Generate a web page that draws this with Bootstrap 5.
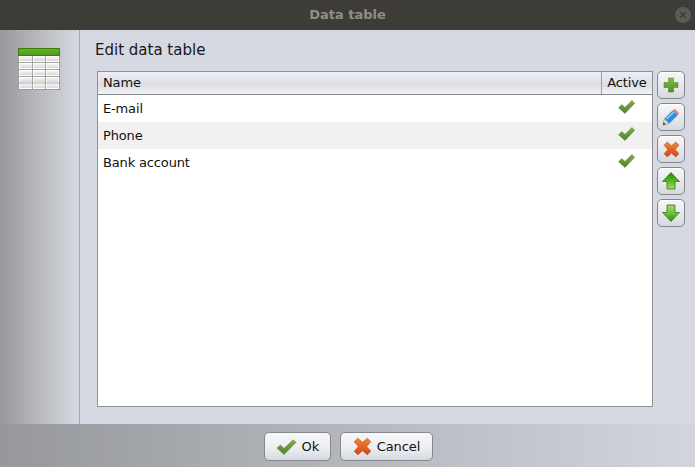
<!DOCTYPE html>
<html lang="en">
<head>
  <meta charset="UTF-8">
  <title>Data table</title>
  <link href="https://cdn.jsdelivr.net/npm/bootstrap@5.3.3/dist/css/bootstrap.min.css" rel="stylesheet">
  <style>
    html, body { height: 467px; overflow: hidden; }
    body {
      font-family: "DejaVu Sans", sans-serif;
      font-size: 13px;
      color: #111;
      background: #d6d9e1;
    }
    .win { width: 695px; height: 467px; }
    .titlebar {
      height: 30px;
      background: linear-gradient(#3e3d39, #3c3b37);
      color: #8f8d88;
      font-weight: 700;
      font-size: 13px;
    }
    .close-dot {
      right: 4px;
      top: 7px;
      width: 16px;
      height: 16px;
      border-radius: 50%;
      background: #5c5b57;
    }
    .mid { height: 394px; }
    .side {
      width: 80px;
      border-right: 1px solid #a4a7ae;
      background: linear-gradient(90deg, #96989c, #b9babf 50%, #d6d9e1);
      padding: 18px 0 0 18px;
    }
    .main { padding: 10px 10px 17px 15px; }
    .heading { font-size: 15px; line-height: 21px; margin: 0 0 10px 0; color: #1c1620; }
    .tbl-wrap { margin-left: 2px; }
    .tbl-box {
      width: 556px;
      height: 336px;
      border: 1px solid #8f9197;
      background: #fff;
      letter-spacing: -.15px;
    }
    .tbl-head {
      height: 23px;
      line-height: 21px;
      border-bottom: 1px solid #83858b;
      background: linear-gradient(#eceef2, #dcdee4 60%, #f3f4f6);
    }
    .col-name { flex: 1; padding-left: 5px; }
    .col-act { width: 51px; text-align: center; }
    .tbl-head .col-act { border-left: 1px solid #a0a2a8; }
    .tbl-row { height: 27px; line-height: 27px; }
    .tbl-row.alt { background: #f1f1f1; }
    .tick-cell { display: flex; justify-content: center; padding: 5px 1px 0 0; }
    .tool-col { width: 28px; margin-left: 4px; }
    .tool-btn {
      width: 28px;
      height: 28px;
      border: 1px solid #85878d;
      border-radius: 5px;
      background: linear-gradient(#f7f7f9, #e6e8ec 55%, #d4d7de);
      box-shadow: 0 1px 0 #fff inset;
      padding: 0;
    }
    .foot {
      height: 43px;
      background: linear-gradient(90deg, #96989c, #d2d5dc);
      padding: 8px 0 0 2px;
    }
    .foot-btn {
      height: 29px;
      border: 1px solid #85878d;
      border-radius: 5px;
      background: linear-gradient(#f7f7f9, #eceef1 55%, #d6d9e0);
      font-size: 13px;
      color: #111;
      padding: 0;
    }
    .foot-btn span { margin-left: 1px; }
    .ok-btn { width: 67px; margin-right: 9px; }
    .cancel-btn { width: 93px; letter-spacing: -.1px; }
  </style>
</head>
<body>

<!-- shared gradients and shapes for the icons -->
<svg width="0" height="0" class="position-absolute">
  <defs>
    <linearGradient id="gGreen" x1="0" y1="0" x2="0" y2="1"><stop offset="0" stop-color="#8bbf3f"/><stop offset="1" stop-color="#4f8a2a"/></linearGradient>
    <linearGradient id="gTick" x1="0" y1="0" x2="0" y2="1"><stop offset="0" stop-color="#86ad4c"/><stop offset="1" stop-color="#527f2a"/></linearGradient>
    <linearGradient id="gUp" x1="0" y1="0" x2="0" y2="1"><stop offset="0" stop-color="#1f8a0c"/><stop offset=".6" stop-color="#5cc02a"/><stop offset="1" stop-color="#a4dc6a"/></linearGradient>
    <linearGradient id="gDown" x1="0" y1="0" x2="0" y2="1"><stop offset="0" stop-color="#a4dc6a"/><stop offset=".5" stop-color="#6cc43a"/><stop offset="1" stop-color="#2a8f10"/></linearGradient>
    <linearGradient id="gRed" x1="0" y1="0" x2="0" y2="1"><stop offset="0" stop-color="#f08a32"/><stop offset="1" stop-color="#d3421a"/></linearGradient>
    <linearGradient id="gHead" x1="0" y1="0" x2="0" y2="1"><stop offset="0" stop-color="#69b324"/><stop offset="1" stop-color="#4f9a18"/></linearGradient>
    <linearGradient id="gCell" x1="0" y1="0" x2="0" y2="1"><stop offset="0" stop-color="#f4f4f4"/><stop offset="1" stop-color="#d8d8d8"/></linearGradient>
    <symbol id="tick" viewBox="0 0 17 14"><path d="M.5 7.800L3.800 4.600 7 7.400 13.800.5l2.900 2.700L7 13.500z" fill="url(#gTick)" stroke="#5a8430" stroke-width=".5"/></symbol>
    <symbol id="cross" viewBox="0 0 16 16"><path d="M1 4L4 1 8 4.500 12 1l3 3-3.500 4 3.500 4-3 3-4-3.500L4 15l-3-3 3.500-4z" fill="url(#gRed)" stroke="#c8441a" stroke-width=".5"/></symbol>
  </defs>
</svg>

<div class="win d-flex flex-column">
  <!-- Title bar -->
  <div class="titlebar position-relative d-flex align-items-center justify-content-center">
    <span>Data table</span>
    <div class="close-dot position-absolute d-flex align-items-center justify-content-center">
      <svg width="8" height="8" viewBox="0 0 8 8"><path d="M1 1l6 6M7 1L1 7" stroke="#3c3b37" stroke-width="1.400"/></svg>
    </div>
  </div>

  <div class="mid d-flex">
    <!-- Left strip with table icon -->
    <div class="side">
      <svg width="42" height="42" viewBox="0 0 42 42" class="d-block">
        <rect x="0.500" y="0.500" width="41" height="41" fill="#fff" stroke="#9a9a9a"/>
        <rect x="0.500" y="0.500" width="41" height="7" fill="url(#gHead)" stroke="#3d7d12"/>
        <g fill="url(#gCell)">
          <rect x="2" y="9" width="12" height="4"/><rect x="16" y="9" width="11" height="4"/><rect x="29" y="9" width="11" height="4"/>
          <rect x="2" y="16" width="12" height="4"/><rect x="16" y="16" width="11" height="4"/><rect x="29" y="16" width="11" height="4"/>
          <rect x="2" y="23" width="12" height="4"/><rect x="16" y="23" width="11" height="4"/><rect x="29" y="23" width="11" height="4"/>
          <rect x="2" y="30" width="12" height="4"/><rect x="16" y="30" width="11" height="4"/><rect x="29" y="30" width="11" height="4"/>
          <rect x="2" y="36" width="12" height="4"/><rect x="16" y="36" width="11" height="4"/><rect x="29" y="36" width="11" height="4"/>
        </g>
        <path d="M1 14.500h40M1 21.500h40M1 28.500h40M1 35h40M14.500 8v33M27.500 8v33" stroke="#a5a5a5"/>
      </svg>
    </div>

    <div class="main flex-grow-1">
      <p class="heading">Edit data table</p>
      <div class="tbl-wrap d-flex">
        <div class="tbl-box">
          <div class="tbl-head d-flex">
            <div class="col-name">Name</div>
            <div class="col-act">Active</div>
          </div>
          <div class="tbl-row d-flex">
            <div class="col-name">E-mail</div>
            <div class="col-act tick-cell"><svg width="17" height="14"><use href="#tick"/></svg></div>
          </div>
          <div class="tbl-row alt d-flex">
            <div class="col-name">Phone</div>
            <div class="col-act tick-cell"><svg width="17" height="14"><use href="#tick"/></svg></div>
          </div>
          <div class="tbl-row d-flex">
            <div class="col-name">Bank account</div>
            <div class="col-act tick-cell"><svg width="17" height="14"><use href="#tick"/></svg></div>
          </div>
        </div>

        <!-- Side tool buttons -->
        <div class="tool-col d-flex flex-column gap-1">
          <button class="tool-btn d-flex align-items-center justify-content-center">
            <svg width="16" height="16" viewBox="0 0 16 16"><path d="M5.500 1h5v4.500H15v5h-4.500V15h-5v-4.500H1v-5h4.500z" fill="url(#gGreen)" stroke="#4c7a26" stroke-width=".5"/></svg>
          </button>
          <button class="tool-btn d-flex align-items-center justify-content-center">
            <svg width="18" height="18" viewBox="0 0 18 18">
              <path d="M1 17l1.500-6L11 2.500 15.500 7 7 15.500z" fill="#2f8fd8" stroke="#1f6aa8" stroke-width=".5"/>
              <path d="M4.500 11L12 4" stroke="#8fd0f5" stroke-width="1.500"/>
              <path d="M11 2.500L12.800.8l4.400 4.400L15.500 7z" fill="#e9806a"/>
              <path d="M1 17l1.500-6L7 15.500z" fill="#f0d9a8"/>
              <path d="M1 17l.7-2.800 2.100 2.100z" fill="#333"/>
            </svg>
          </button>
          <button class="tool-btn d-flex align-items-center justify-content-center">
            <svg width="17" height="17"><use href="#cross" width="17" height="17"/></svg>
          </button>
          <button class="tool-btn d-flex align-items-center justify-content-center">
            <svg width="20" height="20" viewBox="0 0 20 20"><path d="M10 1.500L18.500 10.500H14V18H6V10.500H1.500z" fill="url(#gUp)" stroke="#3b6e1f" stroke-width=".8"/></svg>
          </button>
          <button class="tool-btn d-flex align-items-center justify-content-center">
            <svg width="20" height="20" viewBox="0 0 20 20"><path d="M10 18.500L18.500 9.500H14V2H6V9.500H1.500z" fill="url(#gDown)" stroke="#3b6e1f" stroke-width=".8"/></svg>
          </button>
        </div>
      </div>
    </div>
  </div>

  <!-- Footer buttons -->
  <div class="foot d-flex justify-content-center">
    <button class="foot-btn ok-btn d-flex align-items-center justify-content-center gap-1">
      <svg width="21" height="16" viewBox="0 0 21 16"><path d="M1 9l3.500-3L8 9.500 17 .8l3.200 2.500L8 15.500z" fill="url(#gTick)" stroke="#56802a" stroke-width=".5"/></svg>
      <span>Ok</span>
    </button>
    <button class="foot-btn cancel-btn d-flex align-items-center justify-content-center gap-1">
      <svg width="19" height="19"><use href="#cross" width="19" height="19"/></svg>
      <span>Cancel</span>
    </button>
  </div>
</div>

<script src="https://cdn.jsdelivr.net/npm/bootstrap@5.3.3/dist/js/bootstrap.bundle.min.js"></script>
</body>
</html>
